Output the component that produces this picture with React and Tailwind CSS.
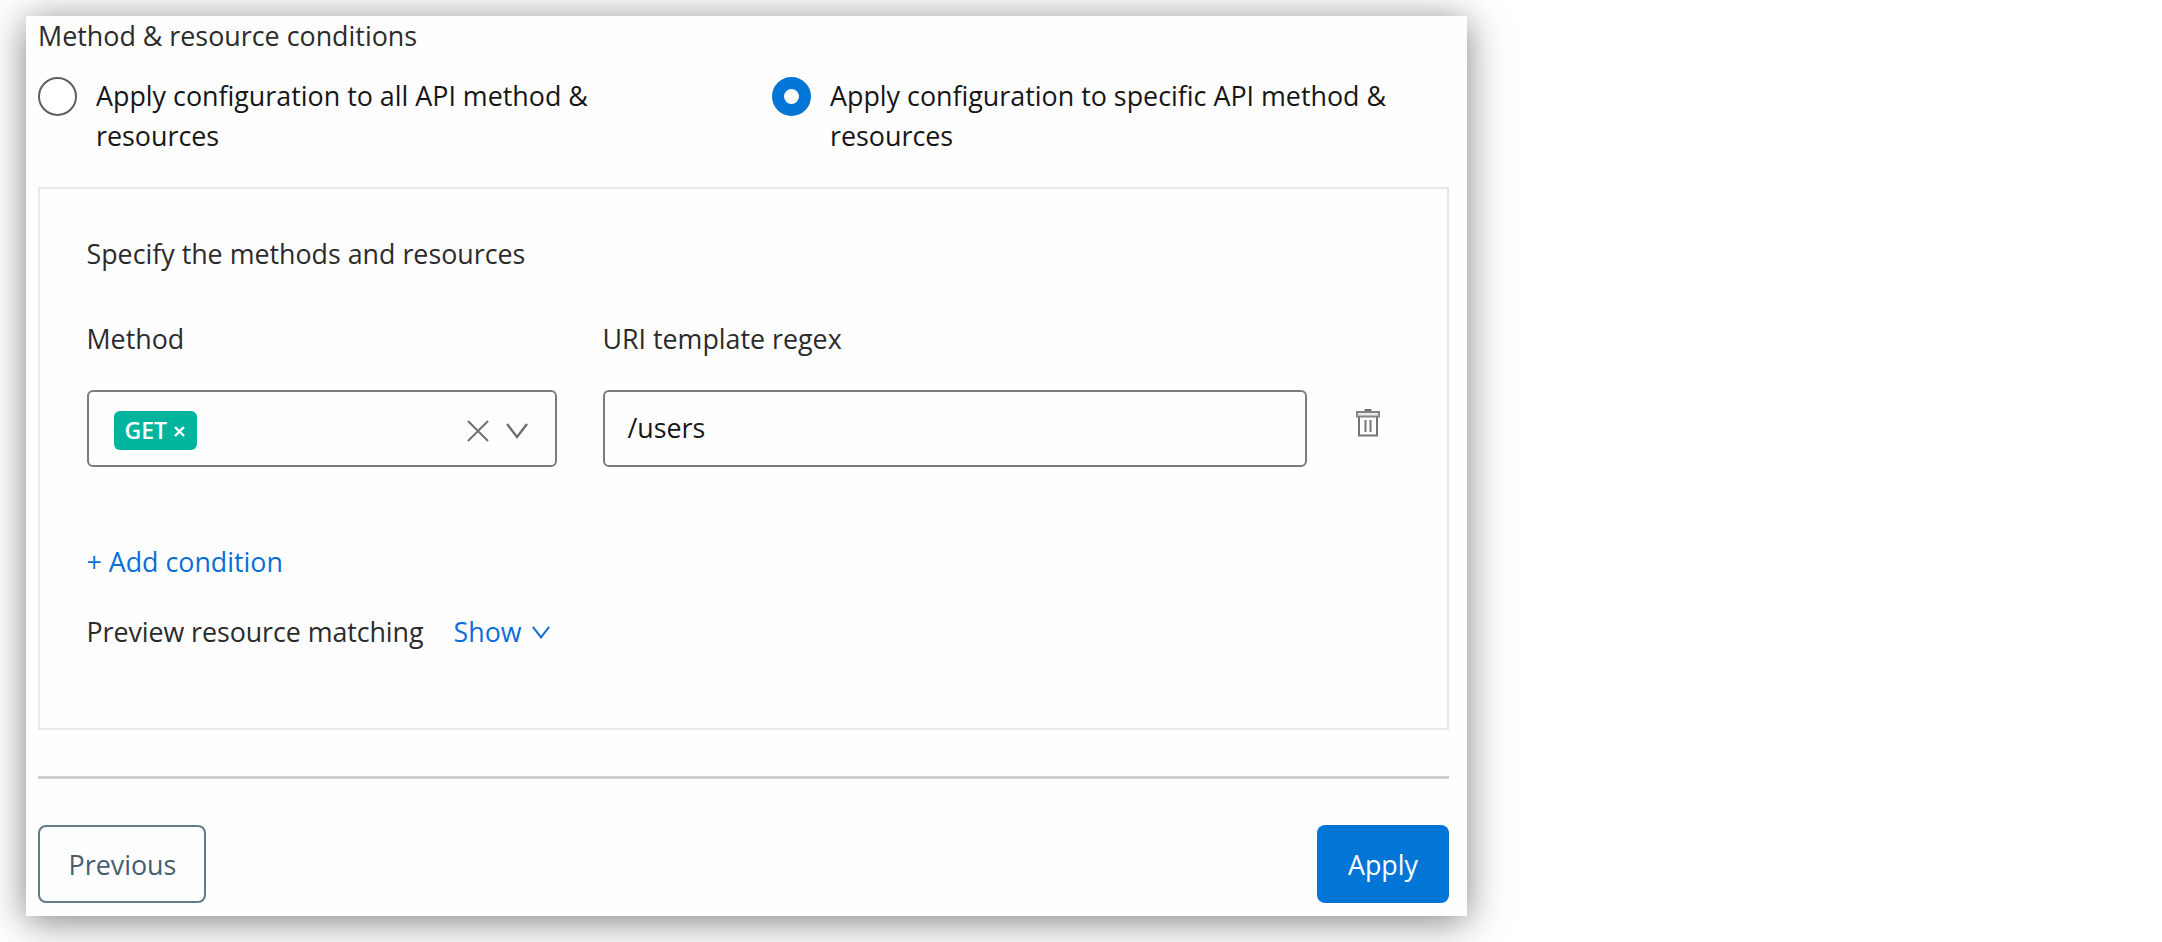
function Chevron({ className }) {
  return (
    <svg className={className} viewBox="0 0 22 16" fill="none" stroke="currentColor" strokeWidth="2.4">
      <path d="M1 1 11 14 21 1" />
    </svg>
  );
}

function ClearIcon({ className }) {
  return (
    <svg className={className} viewBox="0 0 22 22" fill="none" stroke="currentColor" strokeWidth="2">
      <path d="M1 1 21 21M21 1 1 21" />
    </svg>
  );
}

function TrashIcon({ className }) {
  return (
    <svg className={className} viewBox="0 0 24 28" fill="none">
      <path d="M8.5 0h7v3h-7z" fill="#6f6f6f" />
      <path d="M1 3h22v4.5H1z" fill="#e9e9e9" stroke="#858585" strokeWidth="2" />
      <path d="M3 8v18.5h18V8" stroke="#757575" strokeWidth="2" />
      <path d="M9.5 11v12M14.5 11v12" stroke="#757575" strokeWidth="2" />
    </svg>
  );
}

function Radio({ checked, children }) {
  return (
    <label className="flex items-start">
      <span
        className={
          checked
            ? "mt-px size-[39px] shrink-0 rounded-full border-[12px] border-[#0176d7] bg-white"
            : "mt-px size-[39px] shrink-0 rounded-full border-2 border-[#5f5f5f] bg-white"
        }
      />
      <span className="ml-[19px] leading-10 text-[#161616]">{children}</span>
    </label>
  );
}

export default function App() {
  return (
    <div className="h-[942px] w-full overflow-hidden bg-white pt-4 pl-[26px] font-['Open_Sans',sans-serif] text-[26.85px] text-[#2b2b2b]">
      <div className="flex h-[900px] w-[1441px] flex-col bg-[#fefefe] pr-[18px] pl-3 shadow-[0_5px_36px_rgba(0,0,0,0.5)]">
        <h2 className="leading-10">Method &amp; resource conditions</h2>

        <div className="mt-[19.5px] grid grid-cols-[734px_1fr]">
          <Radio>
            Apply configuration to all API method &amp;
            <br />
            resources
          </Radio>
          <Radio checked>
            Apply configuration to specific API method &amp;
            <br />
            resources
          </Radio>
        </div>

        <section className="mt-[31.5px] h-[543px] border-2 border-[#e8e8e8] pt-[45px] pl-[46.5px] text-[26.8px]">
          <p className="leading-10">Specify the methods and resources</p>

          <div className="mt-[45px] flex">
            <div className="w-[470px]">
              <div className="leading-10">Method</div>
              <div className="mt-[31px] flex h-[77px] items-center rounded-md border-2 border-[#7b7b7b] pt-1 pr-[27px] pl-[25px]">
                <span className="flex h-[39px] items-center rounded-md bg-[#00b49d] pr-3 pl-[11px] text-[23px] font-semibold text-white">
                  GET
                  <svg className="mt-0.5 ml-[7px] h-[11px] w-[11px]" viewBox="0 0 11 11" fill="none" stroke="currentColor" strokeWidth="2.4">
                    <path d="M1 1 10 10M10 1 1 10" />
                  </svg>
                </span>
                <ClearIcon className="ml-auto h-[22px] w-[22px] text-[#707070]" />
                <Chevron className="ml-[17px] h-4 w-[22px] text-[#707070]" />
              </div>
            </div>

            <div className="ml-[46px] w-[704px]">
              <div className="leading-10">URI template regex</div>
              <div className="mt-[31px] flex h-[77px] items-center rounded-md border-2 border-[#7b7b7b] pl-[23px] text-[#161616]">
                /users
              </div>
            </div>

            <TrashIcon className="mt-[90px] ml-[49px] h-7 w-6" />
          </div>

          <div className="mt-[75px] leading-10 text-[#0a6ed9]">+ Add condition</div>
          <div className="mt-[30px] flex items-center leading-10">
            <span className="w-[335px] whitespace-nowrap tracking-[-0.06px]">Preview resource matching</span>
            <span className="ml-8 text-[#0a6ed9]">Show</span>
            <Chevron className="ml-[10.5px] h-[13px] w-[18px] text-[#0a6ed9]" />
          </div>
        </section>

        <div className="mt-[46px] h-[3px] bg-[#d0d0d0]" />

        <div className="mt-[46px] flex justify-between">
          <button className="h-[78px] w-[168px] rounded-lg border-2 border-[#5f7c8b] pt-0.5 pl-px text-[#44606f]">Previous</button>
          <button className="h-[78px] w-[132px] rounded-lg bg-[#0176d7] pt-0.5 font-medium text-white">Apply</button>
        </div>
      </div>
    </div>
  );
}
